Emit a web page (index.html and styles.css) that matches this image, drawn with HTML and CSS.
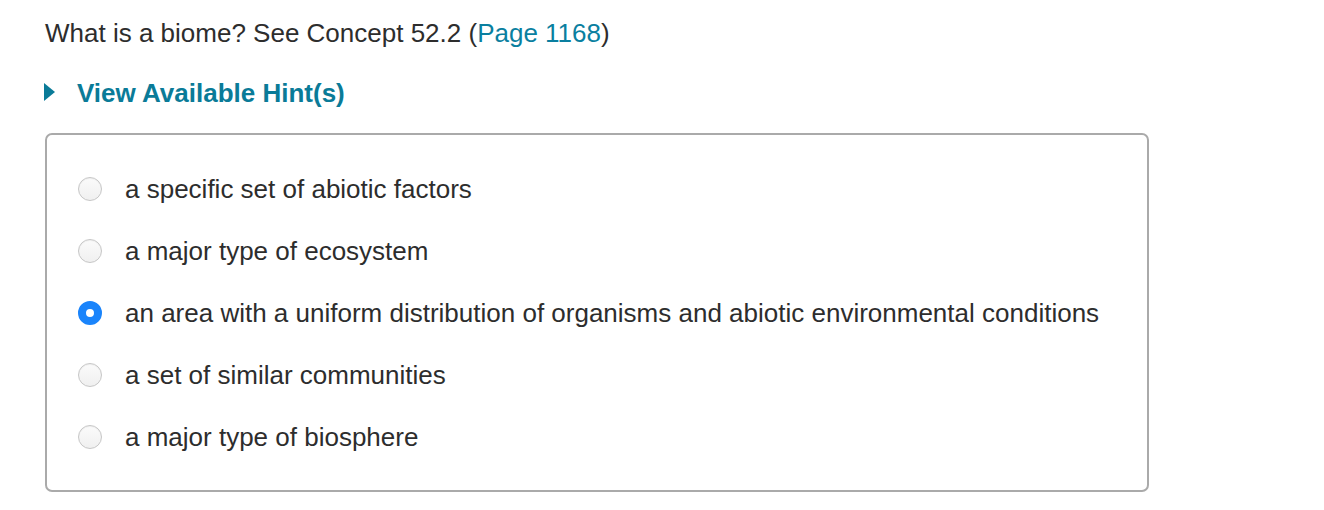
FILE: index.html
```html
<!DOCTYPE html>
<html>
<head>
<meta charset="utf-8">
<link rel="stylesheet" href="styles.css">
</head>
<body>
<div class="page">
  <p class="question">What is a biome? See Concept 52.2 (<a class="link" href="#">Page 1168</a>)</p>
  <div class="hint">
    <span class="tri"></span>
    <span class="hint-text">View Available Hint(s)</span>
  </div>
  <div class="box">
    <label class="opt"><span class="radio"></span><span class="txt">a specific set of abiotic factors</span></label>
    <label class="opt"><span class="radio"></span><span class="txt">a major type of ecosystem</span></label>
    <label class="opt"><span class="radio checked"></span><span class="txt">an area with a uniform distribution of organisms and abiotic environmental conditions</span></label>
    <label class="opt"><span class="radio"></span><span class="txt">a set of similar communities</span></label>
    <label class="opt"><span class="radio"></span><span class="txt">a major type of biosphere</span></label>
  </div>
</div>
</body>
</html>
```
FILE: styles.css
```css
html, body { margin: 0; padding: 0; background: #fff; }
body { font-family: "Liberation Sans", Arial, sans-serif; color: #333; }
.page { padding: 18px 0 0 45px; width: 1104px; }
.question { margin: 0; font-size: 26px; line-height: 30px; color: #2d2d2d; }
.link { color: #0a7fa0; text-decoration: none; }
.hint { display: flex; align-items: center; margin-top: 30px; height: 30px; }
.tri { width: 0; height: 0; border-top: 9px solid transparent; border-bottom: 9px solid transparent; border-left: 11px solid #0a7b98; margin-left: -1px; margin-top: -3px; }
.hint-text { margin-left: 22px; font-size: 26px; font-weight: bold; color: #0a7b98; }
.box { margin-top: 25px; border: 2px solid #aaa; border-radius: 7px; padding: 23px 0 22px 0; display: flex; flex-direction: column; }
.opt { display: flex; align-items: center; height: 62px; padding-left: 31px; }
.radio { width: 24px; height: 24px; box-sizing: border-box; border-radius: 50%; border: 1px solid #c6c6c6; background: linear-gradient(#fbfbfb, #f0f0f0); box-shadow: inset 0 1px 1px rgba(0,0,0,0.05); flex: none; }
.radio.checked { border: 8px solid #1a84fb; background: #fff; box-shadow: none; }
.txt { margin-left: 23px; font-size: 26px; color: #2d2d2d; }
```
